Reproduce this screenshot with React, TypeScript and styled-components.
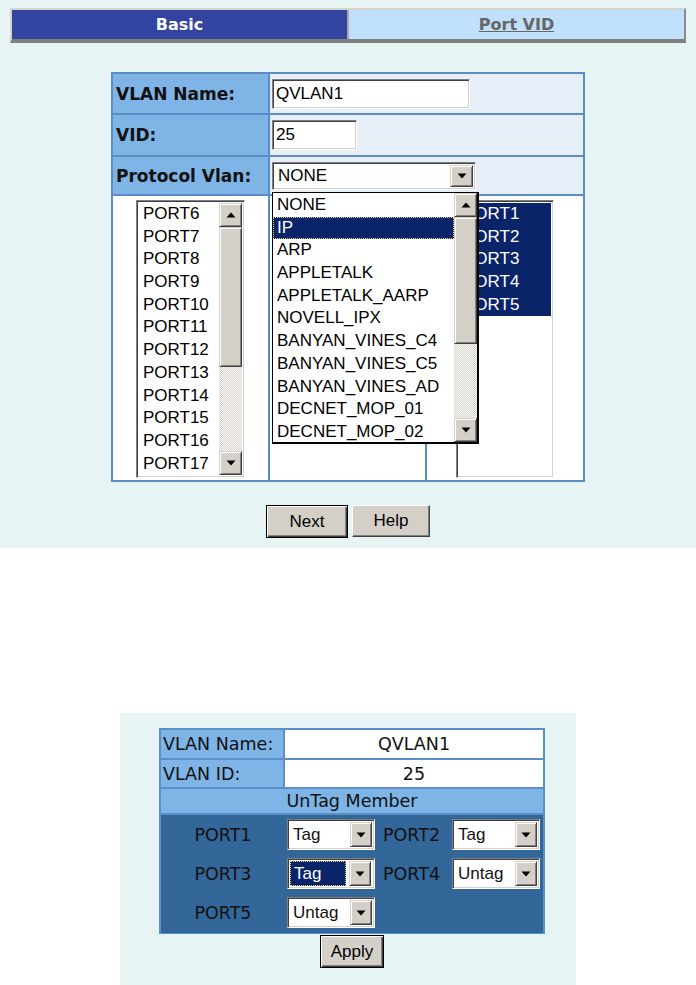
import React from 'react';
import styled, { createGlobalStyle, css } from 'styled-components';

const GlobalStyle = createGlobalStyle`
  html, body {
    margin: 0;
    padding: 0;
    background: #fff;
  }
  body {
    font-family: 'Liberation Sans', Arial, sans-serif;
    color: #000;
  }
`;

const sunken = css`
  box-sizing: border-box;
  border: 1px solid;
  border-color: #808080 #fff #fff #808080;
  box-shadow: inset 1px 1px 0 #404040, inset -1px -1px 0 #d4d0c8;
`;

const raised = css`
  box-sizing: border-box;
  background: #d4d0c8;
  border: 1px solid;
  border-color: #d4d0c8 #404040 #404040 #d4d0c8;
  box-shadow: inset 1px 1px 0 #fff, inset -1px -1px 0 #808080;
`;

const Page = styled.div`
  width: 696px;
`;

const TopPanel = styled.section`
  background: #e6f4f4;
  height: 548px;
  padding-top: 8px;
  box-sizing: border-box;
`;

const TabBar = styled.nav`
  display: flex;
  margin: 0 10px;
  height: 35px;
  box-sizing: border-box;
  border-top: 2px solid #d8d4cc;
  border-left: 2px solid #d8d4cc;
  border-right: 2px solid #8a8a8a;
  border-bottom: 4px solid #808080;
`;

const Tab = styled.a<{ $active?: boolean }>`
  flex: 1;
  display: flex;
  align-items: center;
  justify-content: center;
  font-family: 'DejaVu Sans', Verdana, sans-serif;
  font-weight: 700;
  font-size: 16px;
  cursor: pointer;
  background: ${({ $active }) => ($active ? '#3344a0' : '#c0e0fc')};
  color: ${({ $active }) => ($active ? '#fff' : '#666')};
  text-decoration: ${({ $active }) => ($active ? 'none' : 'underline')};
  border-left: ${({ $active }) => ($active ? 'none' : '2px solid #a8a8a8')};
`;

const FormGrid = styled.div`
  width: 474px;
  margin: 29px auto 0;
  display: grid;
  grid-template-columns: 155px 155px 156px;
  grid-template-rows: 39px 40px 37px 284px;
  gap: 2px;
  border: 2px solid #5b8cc6;
  background: #5b8cc6;
  box-sizing: border-box;
`;

const LabelCell = styled.div`
  background: #7eb4e6;
  display: flex;
  align-items: center;
  padding-left: 3px;
  font-family: 'DejaVu Sans', Verdana, sans-serif;
  font-weight: 700;
  font-size: 17px;
  color: #111;
`;

const ValueCell = styled.div`
  grid-column: span 2;
  background: #e6eef7;
  display: flex;
  align-items: center;
  padding-left: 2px;
  position: relative;
`;

const ListCell = styled.div`
  background: #fff;
  display: flex;
  justify-content: center;
  align-items: flex-start;
  padding-top: 4px;
`;

const TextInput = styled.input<{ $w: number }>`
  ${sunken};
  width: ${({ $w }) => $w}px;
  height: 30px;
  padding: 0 3px;
  margin: 0;
  background: #fff;
  font-family: 'Liberation Sans', Arial, sans-serif;
  font-size: 17px;
  color: #000;
  outline: none;
`;

const SelectBox = styled.div<{ $w: number; $h: number }>`
  ${sunken};
  width: ${({ $w }) => $w}px;
  height: ${({ $h }) => $h}px;
  background: #fff;
  display: flex;
  align-items: stretch;
  padding: 2px;
  font-size: 17px;
`;

const SelectText = styled.div<{ $focused?: boolean }>`
  flex: 1;
  display: flex;
  align-items: center;
  padding-left: 3px;
  ${({ $focused }) =>
    $focused &&
    css`
      flex: 0 0 auto;
      width: calc(100% - 26px);
      box-sizing: border-box;
      background: #0a246a;
      color: #fff;
      border: 1px dotted #e8d070;
      margin-right: 3px;
    `}
`;

const ArrowButton = styled.div<{ $w?: number }>`
  ${raised};
  width: ${({ $w }) => $w ?? 22}px;
  flex: 0 0 auto;
  display: flex;
  align-items: center;
  justify-content: center;
`;

const Arrow = ({ up }: { up?: boolean }) => (
  <svg width="10" height="6" viewBox="0 0 10 6">
    <polygon points={up ? '0.5,5.5 9.5,5.5 5,0.5' : '0.5,0.5 9.5,0.5 5,5.5'} fill="#000" />
  </svg>
);

const ListBox = styled.div<{ $w: number }>`
  ${sunken};
  width: ${({ $w }) => $w}px;
  height: 278px;
  background: #fff;
  display: flex;
  padding: 2px;
`;

const Items = styled.div`
  flex: 1;
  overflow: hidden;
  display: flex;
  flex-direction: column;
`;

const Item = styled.div<{ $selected?: boolean; $focus?: boolean }>`
  height: 22.7px;
  line-height: 22.7px;
  padding-left: 4px;
  font-size: 17px;
  white-space: nowrap;
  box-sizing: border-box;
  background: ${({ $selected }) => ($selected ? '#0a246a' : 'transparent')};
  color: ${({ $selected }) => ($selected ? '#fff' : '#000')};
  ${({ $focus }) =>
    $focus &&
    css`
      border: 1px dotted #e8d070;
      line-height: 20.7px;
      padding-left: 3px;
    `}
`;

const ScrollBar = styled.div`
  width: 23px;
  flex: 0 0 auto;
  display: flex;
  flex-direction: column;
`;

const ScrollButton = styled.div`
  ${raised};
  height: 24px;
  display: flex;
  align-items: center;
  justify-content: center;
`;

const Thumb = styled.div<{ $h: number }>`
  ${raised};
  height: ${({ $h }) => $h}px;
`;

const Track = styled.div`
  flex: 1;
  background: repeating-conic-gradient(#d4d0c8 0 25%, #fff 0 50%) 0 0 / 2px 2px;
`;

const Popup = styled.div`
  position: absolute;
  left: 2px;
  top: 35px;
  z-index: 5;
  width: 207px;
  height: 252px;
  box-sizing: border-box;
  border: 1px solid #000;
  border-right-width: 2px;
  border-bottom-width: 2px;
  background: #fff;
  display: flex;
`;

const PopupItems = styled(Items)`
  padding-top: 1px;
`;

const ButtonRow = styled.div`
  display: flex;
  justify-content: center;
  gap: 4px;
  margin-top: 23px;
`;

const WinButton = styled.button<{ $w: number; $default?: boolean }>`
  box-sizing: border-box;
  width: ${({ $w }) => $w}px;
  height: ${({ $default }) => ($default ? 33 : 32)}px;
  background: #d4d0c8;
  font-family: 'Liberation Sans', Arial, sans-serif;
  font-size: 17px;
  color: #000;
  padding: 0;
  margin: 0;
  border: 1px solid;
  border-color: ${({ $default }) => ($default ? '#000' : '#fff #404040 #404040 #fff')};
  box-shadow: ${({ $default }) =>
    $default
      ? 'inset 1px 1px 0 #fff, inset -1px -1px 0 #404040, inset -2px -2px 0 #808080'
      : 'inset -1px -1px 0 #808080'};
`;

const BottomPanel = styled.section`
  margin: 165px 0 0 120px;
  width: 456px;
  height: 272px;
  background: #e6f4f4;
  padding: 15px 0 0 39px;
  box-sizing: border-box;
`;

const SummaryWrap = styled.div`
  width: 386px;
  display: flex;
  flex-direction: column;
  align-items: center;
`;

const SummaryGrid = styled.div`
  width: 386px;
  display: grid;
  grid-template-columns: 122px 1fr;
  grid-template-rows: 28px 27px 24px auto;
  gap: 2px;
  border: 2px solid #5a8fc9;
  border-bottom-width: 1px;
  background: #5a8fc9;
  box-sizing: border-box;
  font-family: 'DejaVu Sans', Verdana, sans-serif;
  font-size: 17.5px;
  color: #111;
`;

const SumLabel = styled.div`
  background: #7eb4e6;
  display: flex;
  align-items: center;
  padding-left: 2px;
`;

const SumValue = styled.div<{ $header?: boolean }>`
  grid-column: ${({ $header }) => ($header ? 'span 2' : 'auto')};
  background: ${({ $header }) => ($header ? '#7eb4e6' : '#fff')};
  display: flex;
  align-items: center;
  justify-content: center;
`;

const PortArea = styled.div`
  grid-column: span 2;
  background: #336699;
  display: grid;
  grid-template-columns: 124px 93px 72px 1fr;
  grid-auto-rows: 39px;
  align-items: center;
  padding-bottom: 1px;
`;

const PortLabel = styled.div<{ $center?: boolean }>`
  text-align: ${({ $center }) => ($center ? 'center' : 'left')};
  padding-left: ${({ $center }) => ($center ? 0 : 5)}px;
  color: #111;
`;

const PortSelectCell = styled.div`
  padding-left: 2px;
  font-family: 'Liberation Sans', Arial, sans-serif;
`;

const ApplyButton = styled(WinButton)`
  margin-top: 1px;
`;

const leftPorts = Array.from({ length: 12 }, (_, i) => `PORT${i + 6}`);
const rightPorts = ['PORT1', 'PORT2', 'PORT3', 'PORT4', 'PORT5'];
const protocols = [
  'NONE',
  'IP',
  'ARP',
  'APPLETALK',
  'APPLETALK_AARP',
  'NOVELL_IPX',
  'BANYAN_VINES_C4',
  'BANYAN_VINES_C5',
  'BANYAN_VINES_AD',
  'DECNET_MOP_01',
  'DECNET_MOP_02',
];

const members = [
  { port: 'PORT1', mode: 'Tag' },
  { port: 'PORT2', mode: 'Tag' },
  { port: 'PORT3', mode: 'Tag', focused: true },
  { port: 'PORT4', mode: 'Untag' },
  { port: 'PORT5', mode: 'Untag' },
];

const MiniSelect = ({ value, focused }: { value: string; focused?: boolean }) => (
  <SelectBox $w={88} $h={31}>
    <SelectText $focused={focused}>{value}</SelectText>
    <ArrowButton $w={22}>
      <Arrow />
    </ArrowButton>
  </SelectBox>
);

const App: React.FC = () => (
  <Page>
    <GlobalStyle />
    <TopPanel>
      <TabBar>
        <Tab $active>Basic</Tab>
        <Tab>Port VID</Tab>
      </TabBar>

      <FormGrid>
        <LabelCell>VLAN Name:</LabelCell>
        <ValueCell>
          <TextInput $w={198} defaultValue="QVLAN1" readOnly />
        </ValueCell>

        <LabelCell>VID:</LabelCell>
        <ValueCell>
          <TextInput $w={85} defaultValue="25" readOnly />
        </ValueCell>

        <LabelCell>Protocol Vlan:</LabelCell>
        <ValueCell>
          <SelectBox $w={204} $h={28}>
            <SelectText>NONE</SelectText>
            <ArrowButton $w={23}>
              <Arrow />
            </ArrowButton>
          </SelectBox>
          <Popup>
            <PopupItems>
              {protocols.map((p) => (
                <Item key={p} $selected={p === 'IP'} $focus={p === 'IP'}>
                  {p}
                </Item>
              ))}
            </PopupItems>
            <ScrollBar>
              <ScrollButton>
                <Arrow up />
              </ScrollButton>
              <Thumb $h={127} />
              <Track />
              <ScrollButton>
                <Arrow />
              </ScrollButton>
            </ScrollBar>
          </Popup>
        </ValueCell>

        <ListCell>
          <ListBox $w={109}>
            <Items>
              {leftPorts.map((p) => (
                <Item key={p}>{p}</Item>
              ))}
            </Items>
            <ScrollBar>
              <ScrollButton>
                <Arrow up />
              </ScrollButton>
              <Thumb $h={140} />
              <Track />
              <ScrollButton>
                <Arrow />
              </ScrollButton>
            </ScrollBar>
          </ListBox>
        </ListCell>
        <ListCell />
        <ListCell>
          <ListBox $w={98}>
            <Items>
              {rightPorts.map((p) => (
                <Item key={p} $selected>
                  {p}
                </Item>
              ))}
            </Items>
          </ListBox>
        </ListCell>
      </FormGrid>

      <ButtonRow>
        <WinButton $w={82} $default>
          Next
        </WinButton>
        <WinButton $w={78}>Help</WinButton>
      </ButtonRow>
    </TopPanel>

    <BottomPanel>
      <SummaryWrap>
        <SummaryGrid>
          <SumLabel>VLAN Name:</SumLabel>
          <SumValue>QVLAN1</SumValue>
          <SumLabel>VLAN ID:</SumLabel>
          <SumValue>25</SumValue>
          <SumValue $header>UnTag Member</SumValue>
          <PortArea>
            {members.map((m, i) => (
              <React.Fragment key={m.port}>
                <PortLabel $center={i % 2 === 0}>{m.port}</PortLabel>
                <PortSelectCell>
                  <MiniSelect value={m.mode} focused={m.focused} />
                </PortSelectCell>
              </React.Fragment>
            ))}
          </PortArea>
        </SummaryGrid>
        <ApplyButton $w={64} $default>
          Apply
        </ApplyButton>
      </SummaryWrap>
    </BottomPanel>
  </Page>
);

export default App;
